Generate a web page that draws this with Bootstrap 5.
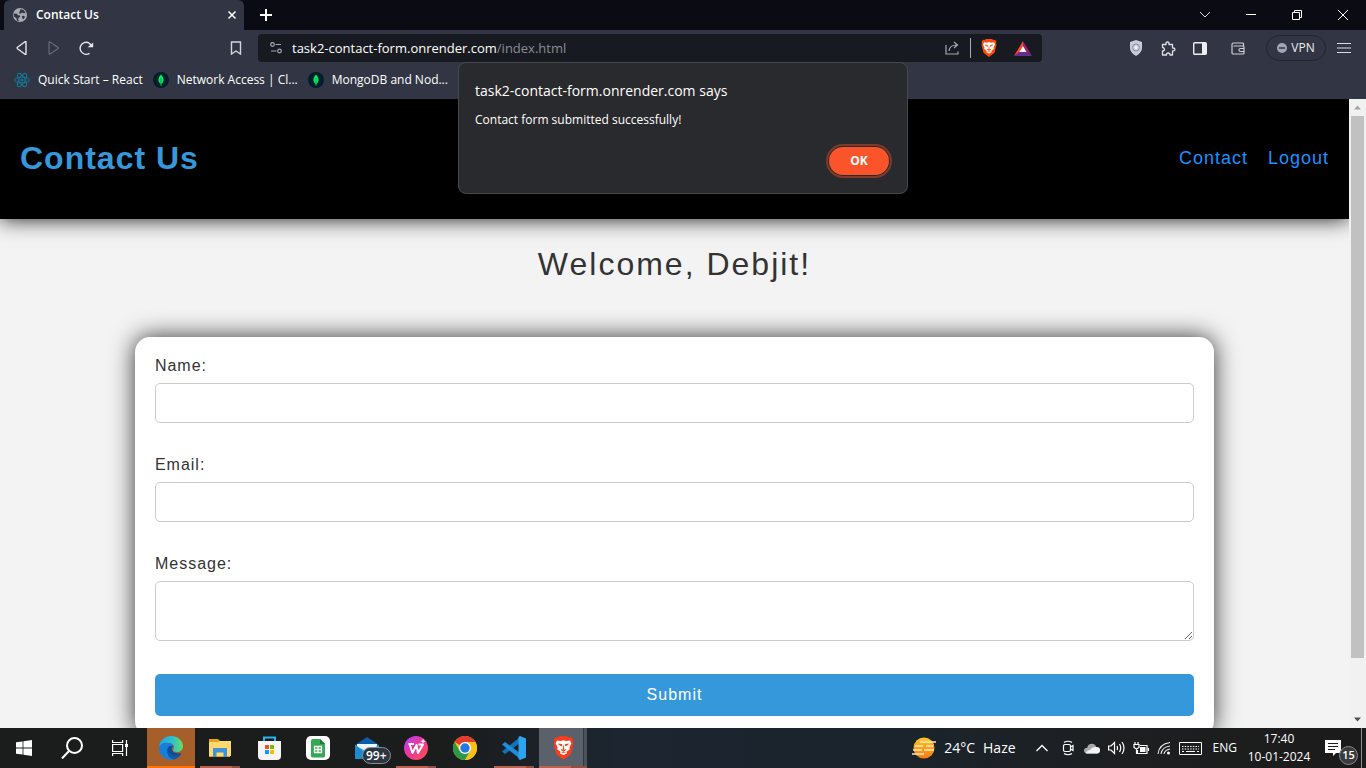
<!DOCTYPE html>
<html lang="en">
<head>
<meta charset="utf-8">
<meta name="viewport" content="width=device-width, initial-scale=1">
<title>Contact Us</title>
<link href="https://cdn.jsdelivr.net/npm/bootstrap@5.3.0/dist/css/bootstrap.min.css" rel="stylesheet">
<style>
  body { font-family: "Open Sans", "Noto Sans", sans-serif; font-size: 12px; line-height: 16px; background: #0b0b14; color: #fff; }
  svg { display: block; flex: none; }
  button { color: inherit; }
  .ghost { background: none; border: 0; padding: 0; display: flex; align-items: center; justify-content: center; flex: none; }

  /* browser frame */
  .tab-strip { height: 30px; background: #0b0b14; }
  .browser-tab { width: 240px; margin-left: 4px; padding: 0 6px 0 8px; background: #323544; border-radius: 6px 6px 0 0; font-size: 12px; font-weight: 600; }
  .win-btn { width: 46px; height: 30px; }
  .tool-bar { height: 36px; background: #323544; color: #dcdde3; }
  .tool-bar .ghost { width: 32px; height: 32px; }
  .nav-keys { flex: 0 0 258px; padding: 0 6px; }
  .address { flex: 0 1 784px; height: 28px; padding: 0 3px 0 12px; gap: 2px; background: #181a21; border-radius: 4px; font-size: 13px; }
  .address .path { color: #8b8c93; }
  .wallet { margin-left: 6px; }
  .vpn { width: 60px; height: 26px; margin: 0 2px 0 12px; border: 1px solid #22242f; border-radius: 13px; background: none; color: #eee; padding: 0; font-size: 12px; line-height: 16px; }
  .menu-key { margin-right: 6px; }
  .bookmarks { height: 33px; padding: 0 14px 6px; gap: 10px; background: #323544; font-size: 12px; }
  .bookmarks a { color: #fff; text-decoration: none; }

  /* alert */
  .js-alert { position: absolute; top: 62px; left: 50%; transform: translateX(-50%); width: 450px; height: 132px; z-index: 5; padding: 18px 16px; background: #292a2d; border: 1px solid #47484b; border-radius: 8px; }
  .js-alert h2 { font-size: 14px; line-height: 20px; font-weight: 400; margin: 0 0 11px; }
  .js-alert p { font-size: 12px; line-height: 16px; margin: 0 0 19px; }
  .ok-btn { width: 60px; height: 28px; margin-right: 2px; padding: 0; border: 0; border-radius: 14px; background: #fb542b; color: #fff; font-size: 12px; font-weight: 700; box-shadow: 0 0 0 1px #292a2d, 0 0 0 3px #7f3a2a; }

  /* page */
  .page { background: #f3f3f3; color: #333; font-family: "Liberation Sans", Arial, sans-serif; font-size: 16px; line-height: 18px; letter-spacing: 1px; }
  .site-head { height: 120px; flex: none; padding: 0 20px 2px; background: #000; box-shadow: 0 0 20px rgba(0, 0, 0, .9); }
  .site-head h1 { font-size: 32px; line-height: 36px; font-weight: 700; color: #3498db; margin: 0; }
  .site-head nav { gap: 20px; }
  .site-head a { font-size: 18px; line-height: 20px; color: #1e90ff; text-decoration: none; }
  .welcome { font-size: 32px; line-height: 36px; font-weight: 400; letter-spacing: 2px; text-align: center; margin: 27px 0 55px; }
  .form-box { width: 80%; margin: 0 auto; padding: 20px; background: #fff; border-radius: 15px; box-shadow: 0 0 25px rgba(0, 0, 0, .8); flex: none; }
  .form-box label { display: block; margin-bottom: 8px; }
  .form-box .form-control { border: 1px solid #ccc; border-radius: 5px; height: 40px; margin-bottom: 33px; }
  .form-box textarea.form-control { height: 60px; min-height: 60px; }
  .send { width: 100%; height: 42px; border: 0; border-radius: 5px; background: #3498db; color: #fff; letter-spacing: 1px; font-size: 16px; }
  .scroll-rail { width: 17px; flex: none; background: #f1f1f1; }
  .scroll-thumb { width: 13px; flex: 543 0 0; background: #c1c1c1; }
  .scroll-rest { flex: 53 0 0; }

  /* task bar */
  .task-bar { height: 40px; background: linear-gradient(90deg, #1b1c1c, #1b1c1c 32%, #1c2530 45%, #1b242c 66%, #1d1e1f 85%, #1b1b1b); }
  .task-bar .ghost { width: 48px; height: 40px; position: relative; }
  .start-keys { margin-right: 3px; }
  .app { margin-right: 1px; }
  .app.running::after { content: ""; position: absolute; left: 4px; right: 4px; bottom: 0; height: 2px; background: linear-gradient(90deg, #b9614f 32px, #8f5044 32px); }
  .app.edge { background: #a65f2a; }
  .app.edge::after { left: 0; right: 0; background: #ff7200; }
  .app.current { background: linear-gradient(90deg, #5b616b 44px, #33383f 44px, #33383f 45px, #4b515b 45px); }
  .app.current::after { left: 0; right: 0; }
  .mail-count { position: absolute; left: 19px; top: 19px; height: 17px; padding: 0 3px; border: 1px solid #8a8d90; border-radius: 9px; background: #2c3640; font-size: 12px; font-weight: 600; line-height: 15px; }
  .tray { font-size: 12px; }
  .weather { font-size: 14px; line-height: 20px; }
  .haze { margin: 0 20px 0 8px; }
  .lang { margin: 0 8px 0 11px; }
  .note-count { position: absolute; left: 26px; top: 18px; width: 19px; height: 19px; border: 1px solid #85878a; border-radius: 50%; background: #3a3b3c; font-size: 11px; font-weight: 600; line-height: 16px; text-align: center; }
  .clock { width: 68px; text-align: center; line-height: 18px; }
</style>
</head>
<body class="vh-100 overflow-hidden d-flex flex-column position-relative">

<div class="tab-strip d-flex flex-shrink-0">
  <div class="browser-tab d-flex align-items-center h-100">
    <svg width="16" height="16" viewBox="0 0 16 16"><circle cx="8" cy="8" r="7" fill="#a9abb1"/><path d="M1.800 6.500L5 6.800l1 1.400 2 .4.2 1.400-1.700.8-.3 1.800.6 1.600-1.800-.5-.6-2.400L2 9.500zM8.500 2l3.500 1.200L13.500 6l-2 .3-1.500-.8-1.700 1.300-1.500-.8 1-1.600zM10 9l2-.3 1 1.300-1.500 2.200-1.300-1z" fill="#323544"/></svg>
    <span class="ms-2 flex-grow-1">Contact Us</span>
    <button class="ghost" aria-label="Close tab"><svg width="12" height="12" viewBox="0 0 12 12" stroke="#fff" stroke-width="1.500"><path d="M2.500 2.500l7 7M9.500 2.500l-7 7"/></svg></button>
  </div>
  <button class="ghost px-3" aria-label="New tab"><svg width="12" height="12" viewBox="0 0 12 12" stroke="#fff" stroke-width="2"><path d="M6 0v12M0 6h12"/></svg></button>
  <div class="ms-auto d-flex">
    <button class="ghost win-btn" aria-label="Search tabs"><svg width="12" height="12" viewBox="0 0 12 12" fill="none" stroke="#ddd"><path d="M1 3l5 5 5-5"/></svg></button>
    <button class="ghost win-btn" aria-label="Minimize"><svg width="10" height="10" viewBox="0 0 10 10" stroke="#fff"><path d="M0 4.500h10"/></svg></button>
    <button class="ghost win-btn" aria-label="Restore"><svg width="10" height="10" viewBox="0 0 10 10" fill="none" stroke="#fff"><path d="M.5 2.500h7v7h-7zM2.500 2.500v-2h7v7h-2"/></svg></button>
    <button class="ghost win-btn" aria-label="Close"><svg width="10" height="10" viewBox="0 0 10 10" stroke="#fff"><path d="M0 0l10 10M10 0L0 10"/></svg></button>
  </div>
</div>

<div class="tool-bar d-flex align-items-center flex-shrink-0">
  <div class="nav-keys d-flex">
    <button class="ghost" aria-label="Back"><svg width="14" height="14" viewBox="0 0 14 14" fill="none" stroke="#e6e6ea" stroke-width="1.400" stroke-linejoin="round"><path d="M11 1v12q0 1-1 .3L2.500 7.700q-.7-.7 0-1.400L10 .7q1-.7 1 .3z"/></svg></button>
    <button class="ghost" aria-label="Forward"><svg width="14" height="14" viewBox="0 0 14 14" fill="none" stroke="#686b78" stroke-width="1.200" stroke-linejoin="round"><path d="M2 1.500v11q0 1 1 .4l8-5.300q.6-.6 0-1.200L3 1.100q-1-.6-1 .4z"/></svg></button>
    <button class="ghost" aria-label="Reload"><svg width="15" height="15" viewBox="0 0 15 15" fill="none" stroke="#e6e6ea" stroke-width="1.400"><path d="M10.500 12.300A6 6 0 1 1 13 6"/><path d="M10.500 5.500h3V3z" fill="#e6e6ea"/></svg></button>
    <button class="ghost ms-auto" aria-label="Bookmark"><svg width="12" height="14" viewBox="0 0 12 14" fill="none" stroke="#d5d6db" stroke-width="1.400"><path d="M1.500 1h9v12L6 10l-4.500 3z"/></svg></button>
  </div>
  <div class="address d-flex align-items-center">
    <svg width="12" height="12" viewBox="0 0 12 12" fill="none" stroke="#a5a6ac" stroke-width="1.200"><circle cx="2.500" cy="2.500" r="1.800"/><circle cx="9.500" cy="9" r="1.800"/><path d="M5.500 2.500H11M1 9h5.500"/></svg>
    <div class="ms-2 flex-grow-1 text-white" role="textbox" aria-label="Address">task2-contact-form.onrender.com<span class="path">/index.html</span></div>
    <button class="ghost" aria-label="Share"><svg width="14" height="14" viewBox="0 0 14 14" fill="none" stroke="#a7a8ad" stroke-width="1.200"><path d="M1 4v9h12v-2.500M4 10c.2-4 3-6 8-6M9 1l3.500 3L9 7"/></svg></button>
    <span class="vr opacity-75 my-1"></span>
    <button class="ghost" aria-label="Brave Shields"><svg width="16" height="18" viewBox="0 0 16 18"><path d="M3.500 1L5 0h6l1.500 1L14 .8l1.500 2-.5 1.500.5 1.500-2 8L8 18l-5.500-4.200-2-8L1 4.300.5 2.800 2 .8z" fill="#fb4b0a"/><path d="M3 3.200l3 .5 2-.6 2 .6 3-.5 1 2.300-1.500 3 .3 1.500-2.500 1.800.4 1.200L8 14.600 5.300 13l.4-1.200-2.500-1.800.3-1.500L2 5.500z" fill="#fff"/><path d="M4.300 6l2.400.4-.3 1zM11.700 6l-2.400.4.3 1zM8 7v3.500M6 10.200l2 1.200 2-1.200M6.500 12.300h3" stroke="#fb4b0a" fill="#fb4b0a" stroke-width=".7"/></svg></button>
    <button class="ghost" aria-label="Rewards"><svg width="18" height="15" viewBox="0 0 18 15"><path d="M9 0L0 15l9-5z" fill="#ff4724"/><path d="M9 0l9 15-6-4.500L9 5z" fill="#9e1f63"/><path d="M0 15h18l-5-4H5z" fill="#662d91"/><path d="M9 5l3.500 6h-7z" fill="#fff"/></svg></button>
  </div>
  <div class="ms-auto d-flex align-items-center">
    <button class="ghost" aria-label="Extension"><svg width="14" height="16" viewBox="0 0 14 16"><path d="M7 0l6 2v6q0 4.500-6 8-6-3.500-6-8V2z" fill="#c9ccd8"/><circle cx="7" cy="7.500" r="3.500" fill="none" stroke="#858da5"/><circle cx="7" cy="7.500" r="1.500" fill="#f1f2f6"/></svg></button>
    <button class="ghost" aria-label="Extensions"><svg width="15" height="15" viewBox="0 0 15 15" fill="none" stroke="#e0e0e4" stroke-width="1.300" stroke-linejoin="round"><path d="M1.500 3.500H5V3q-.2-2 1.500-2T8 3v.5h3.500V7h.5q2 0 2 1.500T12 10h-.5v4H9q0-2-1.800-2T5.500 14h-4v-4q2 0 2-1.700t-2-1.800z"/></svg></button>
    <button class="ghost" aria-label="Sidebar"><svg width="14" height="13" viewBox="0 0 14 13"><rect x=".7" y=".7" width="12.600" height="11.600" rx="1" fill="none" stroke="#eee" stroke-width="1.400"/><path d="M9 1h4v11H9z" fill="#eee"/></svg></button>
    <button class="ghost wallet" aria-label="Wallet"><svg width="14" height="13" viewBox="0 0 14 13" fill="none" stroke="#cfd0d6" stroke-width="1.200"><path d="M12.500 4V2q0-1-1-1h-9Q1 1 1 2.500V11q0 1 1 1h10q1 0 1-1V5q0-1-1-1H2.500M13 6.500H9.500Q8 6.500 8 8t1.500 1.500H13"/></svg></button>
    <button class="vpn d-flex align-items-center justify-content-center"><svg width="10" height="10" viewBox="0 0 10 10" class="me-1"><circle cx="5" cy="5" r="5" fill="#a2a4b8"/><path d="M2 5h6" stroke="#323544" stroke-width="1.500"/></svg>VPN</button>
    <button class="ghost menu-key" aria-label="Menu"><svg width="14" height="12" viewBox="0 0 14 12" stroke="#ddd" stroke-width="1.200"><path d="M0 1.500h14M0 6h14M0 10.500h14"/></svg></button>
  </div>
</div>

<nav class="bookmarks d-flex align-items-center flex-shrink-0" aria-label="Bookmarks">
  <a href="#" class="d-flex align-items-center gap-2"><svg width="16" height="16" viewBox="0 0 16 16" fill="none" stroke="#127b98" stroke-width=".9"><ellipse cx="8" cy="8" rx="7.500" ry="3"/><ellipse cx="8" cy="8" rx="7.500" ry="3" transform="rotate(60 8 8)"/><ellipse cx="8" cy="8" rx="7.500" ry="3" transform="rotate(120 8 8)"/><circle cx="8" cy="8" r="1" fill="#118aa8"/></svg>Quick Start – React</a>
  <a href="#" class="d-flex align-items-center gap-2"><svg width="16" height="16" viewBox="0 0 16 16"><circle cx="8" cy="8" r="8" fill="#001e2b"/><path d="M8 2.500q5 5 .3 10V14h-.6v-1.500Q3 7.500 8 2.500z" fill="#00ed64"/><path d="M8 6v6" stroke="#087a3c" stroke-width=".6"/></svg>Network Access | Cl...</a>
  <a href="#" class="d-flex align-items-center gap-2"><svg width="16" height="16" viewBox="0 0 16 16"><circle cx="8" cy="8" r="8" fill="#001e2b"/><path d="M8 2.500q5 5 .3 10V14h-.6v-1.500Q3 7.500 8 2.500z" fill="#00ed64"/><path d="M8 6v6" stroke="#087a3c" stroke-width=".6"/></svg>MongoDB and Nod...</a>
</nav>

<div class="js-alert d-flex flex-column" role="alertdialog" aria-label="Page message">
  <h2>task2-contact-form.onrender.com says</h2>
  <p>Contact form submitted successfully!</p>
  <button class="ok-btn align-self-end">OK</button>
</div>

<div class="d-flex flex-grow-1 overflow-hidden">
  <main class="page flex-grow-1 d-flex flex-column overflow-hidden">
    <header class="site-head d-flex align-items-center justify-content-between">
      <h1>Contact Us</h1>
      <nav class="d-flex"><a href="#">Contact</a><a href="#">Logout</a></nav>
    </header>
    <h2 class="welcome">Welcome, Debjit!</h2>
    <form class="form-box">
      <label for="name">Name:</label>
      <input id="name" type="text" class="form-control">
      <label for="email">Email:</label>
      <input id="email" type="email" class="form-control">
      <label for="message">Message:</label>
      <textarea id="message" class="form-control"></textarea>
      <button type="button" class="send">Submit</button>
    </form>
  </main>
  <div class="scroll-rail d-flex flex-column align-items-center">
    <svg width="17" height="17" viewBox="0 0 17 17"><path d="M5 10.500l3.500-4 3.500 4z" fill="#a3a3a3"/></svg>
    <div class="scroll-thumb"></div><div class="scroll-rest"></div>
    <svg width="17" height="17" viewBox="0 0 17 17"><path d="M5 6.500l3.500 4 3.500-4z" fill="#505050"/></svg>
  </div>
</div>

<footer class="task-bar d-flex align-items-center flex-shrink-0">
  <div class="start-keys d-flex">
    <button class="ghost" aria-label="Start"><svg width="16" height="16" viewBox="0 0 16 16" fill="#fff"><path d="M0 2.300l6.600-.9v6.200H0zM7.400 1.200L16 0v7.600H7.400zM0 8.400h6.600v6.200L0 13.700zM7.400 8.400H16V16l-8.600-1.200z"/></svg></button>
    <button class="ghost" aria-label="Search"><svg width="22" height="22" viewBox="0 0 22 22" fill="none" stroke="#fff" stroke-width="2"><circle cx="13.500" cy="8.500" r="7.500"/><path d="M8 14l-7 7.500"/></svg></button>
    <button class="ghost" aria-label="Task view"><svg width="16" height="16" viewBox="0 0 16 16" fill="none" stroke="#fff" stroke-width="1.200"><path d="M.6 0v2.500h10V0M.6 16v-2.500h10V16M.6 4.500h10v7H.6zM14.500 0v16"/><path d="M13 4h3v3h-3z" fill="#fff" stroke="none"/></svg></button>
  </div>
  <button class="ghost app running edge" aria-label="Edge"><svg width="24" height="24" viewBox="0 0 24 24"><defs><linearGradient id="eg" x1="0" x2="1"><stop stop-color="#1aa5e8"/><stop offset=".6" stop-color="#35c1c8"/><stop offset="1" stop-color="#68e05a"/></linearGradient></defs><path d="M0 11C1 4 6 0 12 0c7 0 12 5 12 10 0 4-3 6-6 6-3 0-4-1-4-2s1-1 1-3c0-2-2-4-6-4-5 0-8 2-9 4z" fill="url(#eg)"/><path d="M0 12c1-4 5-6 9-5 3 0 5 1.500 6 4-3-2-6 0-6 4 0 5 4 7 7 8-8 3-16-3-16-11z" fill="#1680d8"/><path d="M9.500 11c-3 4-.5 9 4.500 10 4 .7 7-1.500 8.500-4C18 18 14 17 13 14c-.5-1.500 0-2.500 1-3.500-1.500-1-3.500-.8-4.500.5z" fill="#0c4c97"/><path d="M9 12c-2 5 0 10 6 11.600 3-.6 6-3 7.500-6.600-3 3-8 3.500-11 .5C9.500 16 9 14 9 12z" fill="#0f59ad"/></svg></button>
  <button class="ghost app running" aria-label="File Explorer"><svg width="22" height="18" viewBox="0 0 22 18"><path d="M0 0h9l2 2h10v16H0z" fill="#e8a317"/><path d="M0 3h9l1.500-1H22v15H0z" fill="#ffd970"/><path d="M4 18V9h14v9h-3.500v-4.500h-7V18z" fill="#3f93d8"/></svg></button>
  <button class="ghost app" aria-label="Store"><svg width="24" height="24" viewBox="0 0 24 24"><path d="M7 5V1.500h11V5" fill="none" stroke="#2bb3f0" stroke-width="2"/><path d="M1 5h23v15q0 4-4 4H5q-4 0-4-4z" fill="#f5f5f5"/><path d="M8 9h4v4H8z" fill="#f25022"/><path d="M13 9h4v4h-4z" fill="#7fba00"/><path d="M8 14h4v4H8z" fill="#00a4ef"/><path d="M13 14h4v4h-4z" fill="#ffb900"/></svg></button>
  <button class="ghost app" aria-label="Sheets"><svg width="24" height="24" viewBox="0 0 24 24"><rect width="24" height="24" rx="5" fill="#fff"/><path d="M7 3h7l5 5v12q0 1.500-1.500 1.500h-11Q5 21.500 5 20V4.500Q5 3 7 3z" fill="#34a853"/><path d="M14 3l5 5h-5z" fill="#188038"/><path d="M8.500 10.500h7v6h-7zM8.500 13.500h7M12 10.500v6" fill="none" stroke="#fff" stroke-width="1.300"/></svg></button>
  <button class="ghost app" aria-label="Mail"><svg width="24" height="24" viewBox="0 0 24 24"><path d="M0 9l12-8 12 8v14H0z" fill="#0c5ca8"/><path d="M2 8h20v8H2z" fill="#eaf5fc"/><path d="M0 9l12 7 12-7v14H0z" fill="#34a7e4"/><path d="M0 9l18 14H0z" fill="#1d8bd0"/></svg><span class="mail-count">99+</span></button>
  <button class="ghost app running" aria-label="WPS"><svg width="24" height="24" viewBox="0 0 24 24"><defs><linearGradient id="wg" x1="0" x2="1" y2="1"><stop stop-color="#b53cff"/><stop offset=".5" stop-color="#ee3898"/><stop offset="1" stop-color="#ff5148"/></linearGradient></defs><circle cx="12" cy="12" r="12" fill="url(#wg)"/><path d="M4.500 8H10M5.500 8l3 9 4-8 1.500 8 5-8.500h-4.500" fill="none" stroke="#fff" stroke-width="2" stroke-linejoin="round"/><path d="M19 2.500l.7 2 2 .7-2 .7-.7 2-.7-2-2-.7 2-.7z" fill="#fff"/></svg></button>
  <button class="ghost app" aria-label="Chrome"><svg width="24" height="24" viewBox="0 0 24 24"><circle cx="12" cy="12" r="12" fill="#fbc116"/><path d="M12 12L1.600 6A12 12 0 0 1 22.400 6H12z" fill="#e33b2e"/><path d="M1.600 6A12 12 0 0 0 12 24l5.200-9L12 12 6.800 15z" fill="#2a9a48"/><path d="M12 6h10.400A12 12 0 0 1 12 24l5.200-9z" fill="#fbc116"/><circle cx="12" cy="12" r="6" fill="#fff"/><circle cx="12" cy="12" r="4.700" fill="#2878e4"/></svg></button>
  <button class="ghost app running" aria-label="VS Code"><svg width="24" height="24" viewBox="0 0 24 24"><path d="M18 1L0 15.500 3 18 18 7z" fill="#1273b8"/><path d="M18 23L0 8.500 3 6l15 11z" fill="#1e8ed8"/><path d="M18 0l6 2.500v19L18 24l-1.500-1V1z" fill="#2ca5ee"/></svg></button>
  <button class="ghost app running current" aria-label="Brave"><svg width="21" height="24" viewBox="0 0 16 18"><path d="M3.500 1L5 0h6l1.500 1L14 .8l1.500 2-.5 1.500.5 1.500-2 8L8 18l-5.500-4.200-2-8L1 4.300.5 2.800 2 .8z" fill="#fb3b1a"/><path d="M3 3.200l3 .5 2-.6 2 .6 3-.5 1 2.300-1.500 3 .3 1.500-2.500 1.800.4 1.200L8 14.600 5.300 13l.4-1.200-2.500-1.800.3-1.500L2 5.500z" fill="#fff"/><path d="M4.300 6l2.400.4-.3 1zM11.700 6l-2.400.4.3 1zM8 7v3.500M6 10.200l2 1.200 2-1.200M6.500 12.300h3" stroke="#fb3b1a" fill="#fb3b1a" stroke-width=".7"/></svg></button>

  <div class="tray ms-auto d-flex align-items-center">
    <svg width="24" height="22" viewBox="0 0 24 22"><defs><linearGradient id="sun" x2="0" y2="1"><stop stop-color="#ffc62b"/><stop offset="1" stop-color="#f57c12"/></linearGradient></defs><circle cx="12" cy="11" r="10.500" fill="url(#sun)"/><path d="M8 5h16M3 9h8M14 9h7M1 13h9M12 13h10M0 17h12" stroke="#ffe7b5" stroke-width="1.600"/></svg>
    <span class="weather ms-2">24°C</span><span class="weather haze">Haze</span>
    <div class="d-flex align-items-center gap-2">
      <svg width="12" height="8" viewBox="0 0 12 8" fill="none" stroke="#fff" stroke-width="1.300"><path d="M.5 7L6 1.500 11.500 7"/></svg>
      <svg width="16" height="16" viewBox="0 0 16 16" fill="none" stroke="#fff" stroke-width="1.200" class="ms-1"><rect x="3.500" y="4.500" width="7" height="7" rx="1.500"/><path d="M10.500 7l2.500-1.500v5L10.500 9M4 2.500q4-2.500 8 0M4 13.500q4 2.500 8 0"/></svg>
      <svg width="16" height="11" viewBox="0 0 16 11"><path d="M3 10.500q-3-.3-3-3T3.200 4.800Q4 .8 8 .8q3 0 4.200 3.200Q16 4 16 7.300q0 3-3 3.200z" fill="#aaa"/><path d="M2 10.500q0-3 4-3.500 2-3.200 6-3Q16 4 16 7.300q0 3-3 3.200z" fill="#f4f4f4"/></svg>
      <svg width="17" height="14" viewBox="0 0 17 14" fill="none" stroke="#fff" stroke-width="1.200"><path d="M.6 5H3l3.500-3.500v11L3 9H.6zM9 5q1 2 0 4M11.500 3q2.500 4 0 8M14 1q4 6 0 12"/></svg>
      <svg width="16" height="13" viewBox="0 0 16 13" fill="none" stroke="#fff" stroke-width="1.200"><path d="M7 3.500h7v8H4.500V8M2 0v2.500M5 0v2.500M1 2.500h5v3L3.500 7 1 5.500zM3.500 7v4.500h2M15.500 6v3"/><path d="M7 5h5.500v5H7z" fill="#fff" stroke="none"/></svg>
      <svg width="14" height="14" viewBox="0 0 14 14" fill="none" stroke="#eee" stroke-width="1.100"><path d="M1 13Q2 3 13 1.500M4 13q1-7 9-8M7 13q.5-4 6-5"/><circle cx="11.500" cy="12" r="1.500" fill="#fff" stroke="none"/></svg>
      <svg width="23" height="13" viewBox="0 0 23 13" fill="none" stroke="#fff"><path d="M.5.5h22v12H.5z"/><path d="M3 4.500h17M3 7h17" stroke-dasharray="1.500 1.200"/><path d="M3 9.500h2M7 9.500h9M18 9.500h2"/></svg>
    </div>
    <span class="lang">ENG</span>
    <div class="clock">17:40<br>10-01-2024</div>
    <button class="ghost" aria-label="Notifications"><svg width="16" height="16" viewBox="0 0 16 16" class="me-2"><path d="M0 0h16v13h-5l-3 3v-3H0z" fill="#fff"/><path d="M3 3.500h10M3 6.500h10M3 9.500h7" stroke="#1b1b1b" stroke-width="1.200"/></svg><span class="note-count">15</span></button>
    <span class="vr me-1 opacity-50"></span>
  </div>
</footer>

<script src="https://cdn.jsdelivr.net/npm/bootstrap@5.3.0/dist/js/bootstrap.bundle.min.js"></script>
</body>
</html>
